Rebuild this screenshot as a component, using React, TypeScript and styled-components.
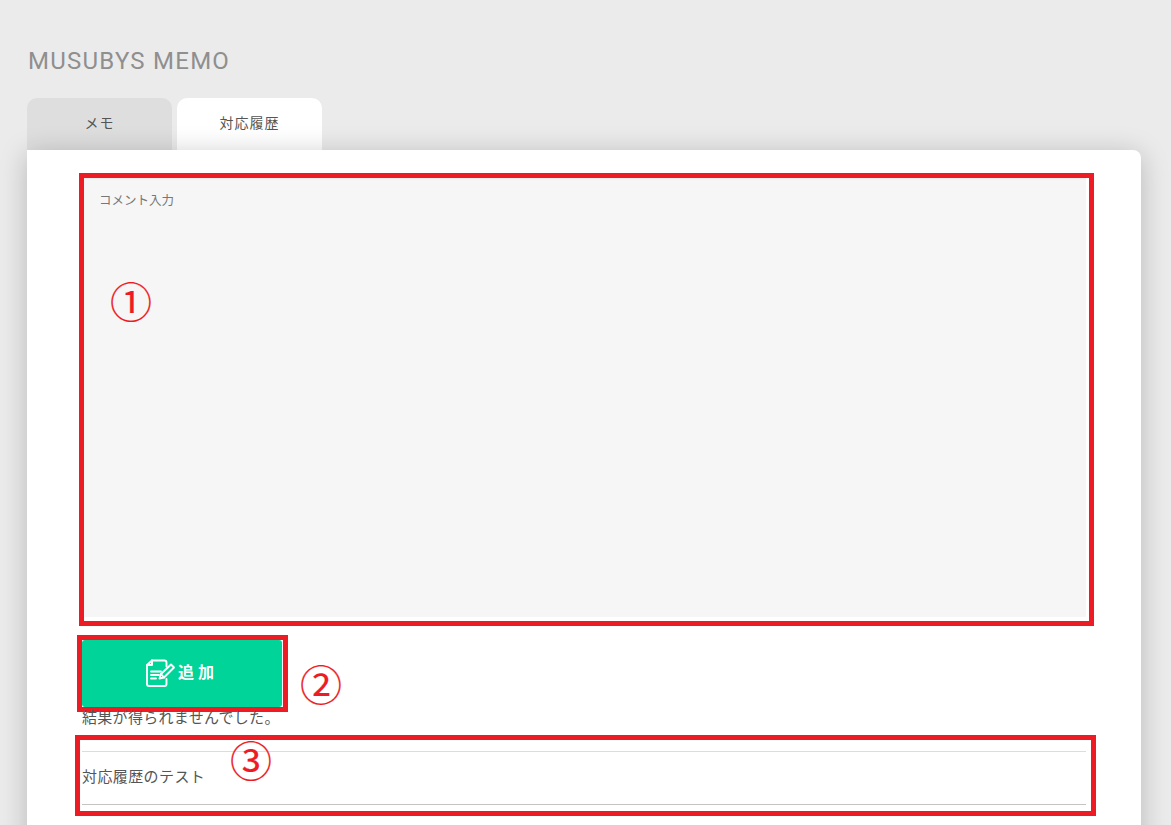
import React from 'react'
import styled, { createGlobalStyle } from 'styled-components'

const GlobalStyle = createGlobalStyle`
html, body {
    margin: 0;
    padding: 0;
    height: 100%;
    overflow: hidden;
    background: #ebebeb;
}
body {
    font-family: "Noto Sans CJK JP", "Noto Sans", sans-serif;
}
`

const Page = styled.div`
    height: 825px;
    overflow: hidden;
    padding: 47px 30px 0 27px;
    box-sizing: border-box;
`

const Title = styled.h1`
    margin: 0 0 22px 1px;
    font-family: Roboto, "Liberation Sans", sans-serif;
    font-size: 24px;
    line-height: 29px;
    font-weight: 400;
    letter-spacing: 1.25px;
    color: #8f8f8f;
`

const Tabs = styled.div`
    display: flex;
    gap: 5px;
`

const Tab = styled.div<{ $active?: boolean }>`
    width: 145px;
    height: 52px;
    box-sizing: border-box;
    padding-top: 14px;
    border-radius: 10px 10px 0 0;
    background: ${p => (p.$active ? '#fff' : '#dedede')};
    color: #555;
    font-size: 14px;
    line-height: 21px;
    letter-spacing: 1px;
    text-align: center;
`

const Card = styled.div`
    position: relative;
    display: flex;
    flex-direction: column;
    align-items: flex-start;
    width: 1114px;
    height: 800px;
    box-sizing: border-box;
    padding-top: 23px;
    background: #fff;
    border-radius: 0 8px 8px 8px;
    box-shadow: 0 4px 28px rgba(0, 0, 0, 0.22);
`

const RedFrame = styled.section<{ $indent: number; $width: number; $pad: string; $gap?: number }>`
    width: ${p => p.$width}px;
    margin: ${p => p.$gap ?? 0}px 0 0 ${p => p.$indent}px;
    padding: ${p => p.$pad};
    box-sizing: border-box;
    border: 5px solid #ed1c24;
`

const CommentBox = styled.div`
    height: 439px;
    box-sizing: border-box;
    padding: 12px 15px;
    background: #f6f6f6;
    box-shadow: inset 0 2px 2px -1px rgba(0, 0, 0, 0.05);
    color: #777;
    font-size: 12.5px;
    line-height: 19px;
`

const AddButton = styled.button`
    display: flex;
    align-items: center;
    justify-content: center;
    gap: 1px;
    width: 200px;
    height: 67px;
    padding: 0 1px 2px 0;
    border: 0;
    border-radius: 3px;
    background: #00d498;
    color: #fff;
    font-family: inherit;
    font-size: 16px;
    font-weight: 700;
    letter-spacing: 4px;
`

const ButtonLabel = styled.span`
    margin-top: -3px;
`

const EmptyMessage = styled.p`
    margin: -5px 0 8px 55px;
    color: #555;
    font-size: 15px;
    line-height: 20px;
    letter-spacing: 0.3px;
`

const HistoryList = styled.div`
    height: 54px;
    box-sizing: border-box;
    display: flex;
    align-items: center;
    padding-bottom: 5px;
    border-top: 1px solid #dcdcdc;
    border-bottom: 1px solid #c4c4c4;
    color: #555;
    font-size: 15px;
    letter-spacing: 0.4px;
`

const Marker = styled.span<{ $left: number; $top: number }>`
    position: absolute;
    left: ${p => p.$left}px;
    top: ${p => p.$top}px;
    color: #ed1c24;
    font-size: 42px;
    line-height: 48px;
    -webkit-text-stroke: 0.2px #ed1c24;
`

function MemoAddIcon() {
    return (
        <svg width="32" height="30" viewBox="0 0 32 30" fill="none" stroke="#fff" strokeWidth="1.9" strokeLinecap="round" strokeLinejoin="round">
            <path d="M7 2.5h12.5a2 2 0 0 1 2 2v4" />
            <path d="M7 2.5v4.5h-5" />
            <path d="M7 2.5L2 7v19a2 2 0 0 0 2 2h15.5a2 2 0 0 0 2-2v-5" />
            <path d="M6 13.5h10M6 17h8M6 20.5h5" />
            <path d="M14.5 20.5l1.5-4.5L26 6.5l3 3-10 10z" />
            <path d="M16 16l3 3.5" />
        </svg>
    )
}

export default function App() {
    return (
        <>
            <GlobalStyle />
            <Page>
                <Title>MUSUBYS MEMO</Title>
                <Tabs>
                    <Tab>メモ</Tab>
                    <Tab $active>対応履歴</Tab>
                </Tabs>
                <Card>
                    <RedFrame $indent={52} $width={1015} $pad="0 3px 4px 0">
                        <CommentBox>コメント入力</CommentBox>
                    </RedFrame>
                    <RedFrame $indent={50} $width={211} $pad="0 1px 0 0" $gap={9}>
                        <AddButton>
                            <MemoAddIcon />
                            <ButtonLabel>追加</ButtonLabel>
                        </AddButton>
                    </RedFrame>
                    <EmptyMessage>結果が得られませんでした。</EmptyMessage>
                    <RedFrame $indent={48} $width={1021} $pad="11px 5px 6px 2px">
                        <HistoryList>対応履歴のテスト</HistoryList>
                    </RedFrame>
                    <Marker $left={83} $top={126}>①</Marker>
                    <Marker $left={273} $top={509}>②</Marker>
                    <Marker $left={203} $top={585}>③</Marker>
                </Card>
            </Page>
        </>
    )
}
